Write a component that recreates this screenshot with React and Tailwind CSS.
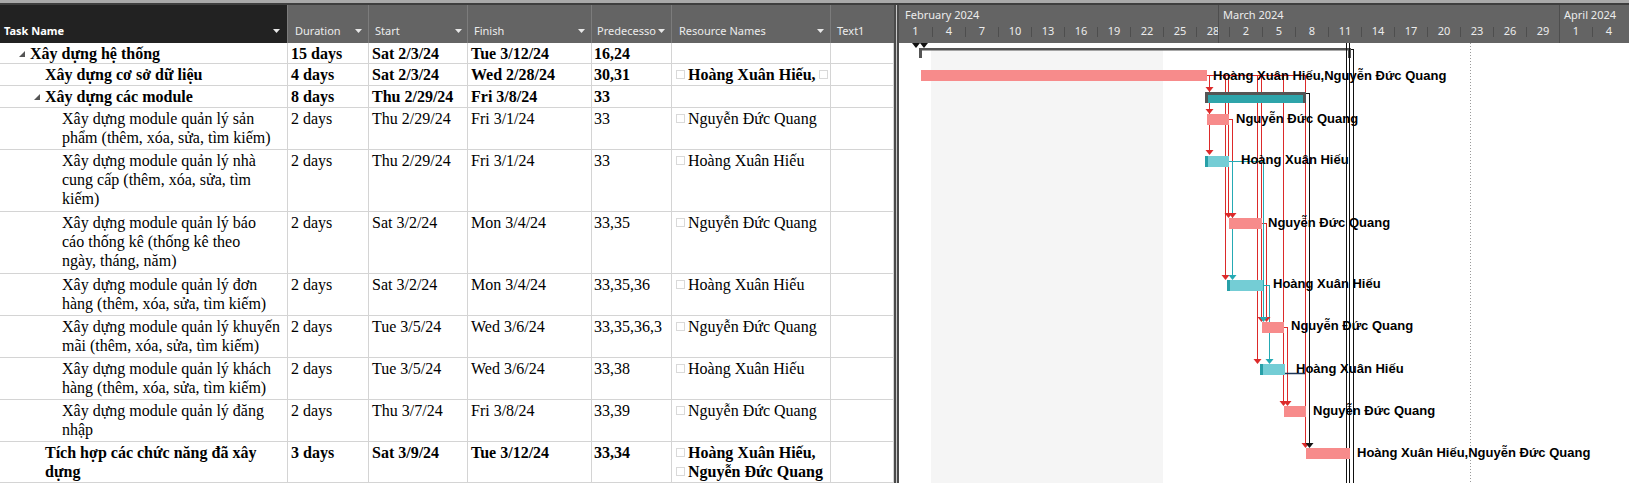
import React from 'react'

const TASKS = [
  { name: ['Xây dựng hệ thống'], pad: 'pl-[19px]', tri: true, b: true, h: 'h-[21px]', dur: '15 days', start: 'Sat 2/3/24', finish: 'Tue 3/12/24', pred: '16,24', res: [] },
  { name: ['Xây dựng cơ sở dữ liệu'], pad: 'pl-[45px]', b: true, h: 'h-[22px]', dur: '4 days', start: 'Sat 2/3/24', finish: 'Wed 2/28/24', pred: '30,31', res: ['Hoàng Xuân Hiếu,'], more: true },
  { name: ['Xây dựng các module'], pad: 'pl-[34px]', tri: true, b: true, h: 'h-[22px]', dur: '8 days', start: 'Thu 2/29/24', finish: 'Fri 3/8/24', pred: '33', res: [] },
  { name: ['Xây dựng module quản lý sản', 'phẩm (thêm, xóa, sửa, tìm kiếm)'], pad: 'pl-[62px]', h: 'h-[42px]', dur: '2 days', start: 'Thu 2/29/24', finish: 'Fri 3/1/24', pred: '33', res: ['Nguyễn Đức Quang'] },
  { name: ['Xây dựng module quản lý nhà', 'cung cấp (thêm, xóa, sửa, tìm', 'kiếm)'], pad: 'pl-[62px]', h: 'h-[62px]', dur: '2 days', start: 'Thu 2/29/24', finish: 'Fri 3/1/24', pred: '33', res: ['Hoàng Xuân Hiếu'] },
  { name: ['Xây dựng module quản lý báo', 'cáo thống kê (thống kê theo', 'ngày, tháng, năm)'], pad: 'pl-[62px]', h: 'h-[62px]', dur: '2 days', start: 'Sat 3/2/24', finish: 'Mon 3/4/24', pred: '33,35', res: ['Nguyễn Đức Quang'] },
  { name: ['Xây dựng module quản lý đơn', 'hàng (thêm, xóa, sửa, tìm kiếm)'], pad: 'pl-[62px]', h: 'h-[42px]', dur: '2 days', start: 'Sat 3/2/24', finish: 'Mon 3/4/24', pred: '33,35,36', res: ['Hoàng Xuân Hiếu'] },
  { name: ['Xây dựng module quản lý khuyến', 'mãi (thêm, xóa, sửa, tìm kiếm)'], pad: 'pl-[62px]', h: 'h-[42px]', dur: '2 days', start: 'Tue 3/5/24', finish: 'Wed 3/6/24', pred: '33,35,36,3', res: ['Nguyễn Đức Quang'] },
  { name: ['Xây dựng module quản lý khách', 'hàng (thêm, xóa, sửa, tìm kiếm)'], pad: 'pl-[62px]', h: 'h-[42px]', dur: '2 days', start: 'Tue 3/5/24', finish: 'Wed 3/6/24', pred: '33,38', res: ['Hoàng Xuân Hiếu'] },
  { name: ['Xây dựng module quản lý đăng', 'nhập'], pad: 'pl-[62px]', h: 'h-[42px]', dur: '2 days', start: 'Thu 3/7/24', finish: 'Fri 3/8/24', pred: '33,39', res: ['Nguyễn Đức Quang'] },
  { name: ['Tích hợp các chức năng đã xây', 'dựng'], pad: 'pl-[45px]', b: true, h: 'h-[41px]', dur: '3 days', start: 'Sat 3/9/24', finish: 'Tue 3/12/24', pred: '33,34', res: ['Hoàng Xuân Hiếu,', 'Nguyễn Đức Quang'] },
]

const DAYS = ['1', '4', '7', '10', '13', '16', '19', '22', '25', '28', '2', '5', '8', '11', '14', '17', '20', '23', '26', '29', '1', '4']

const RED = '#dc2a2a'
const TL = '#25aab4'
const PINK = '#f78b8b'
const TEAL = '#74cdd5'
const TEALD = '#27a0a8'

function DropArrow() {
  return (
    <svg width="7" height="4" className="shrink-0">
      <polygon points="0,0 7,0 3.5,4" fill="#e8e8e8" />
    </svg>
  )
}

function HeadCell({ className, label, arrow = true, bold }) {
  return (
    <div className={`h-full flex items-end pb-[4px] border-r border-[#7c7c7c] ${className}`}>
      <div className="flex items-center justify-between w-full h-[16px] min-w-0">
        <span className={`whitespace-nowrap ${bold ? 'font-bold text-white' : ''}`}>{label}</span>
        {arrow && <DropArrow />}
      </div>
    </div>
  )
}

function Box() {
  return <span className="w-[9px] h-[9px] border border-[#d9d9d9] shrink-0 bg-white" />
}

function Cell({ className, children }) {
  return <div className={`h-full border-r border-[#d4d4d4] overflow-hidden whitespace-nowrap pt-[1px] ${className}`}>{children}</div>
}

function Row({ t }) {
  return (
    <div className={`flex border-b border-[#d4d4d4] shrink-0 ${t.h} ${t.b ? 'font-bold' : ''}`}>
      <Cell className={`w-[288px] flex ${t.pad}`}>
        {t.tri && (
          <span className="w-[11px] h-[19px] flex items-center shrink-0">
            <svg width="6" height="6"><polygon points="6,0 6,6 0,6" fill="#555" /></svg>
          </span>
        )}
        <div>
          {t.name.map((l, i) => <div key={i}>{l}</div>)}
        </div>
      </Cell>
      <Cell className="w-[81px] pl-[3px]">{t.dur}</Cell>
      <Cell className="w-[99px] pl-[3px]">{t.start}</Cell>
      <Cell className="w-[124px] pl-[3px]">{t.finish}</Cell>
      <Cell className="w-[80px] pl-[2px]">{t.pred}</Cell>
      <Cell className="w-[159px] pl-[4px]">
        {t.res.map((r, i) => (
          <div key={i} className="flex items-center gap-[3px] h-[19px]">
            <Box />
            <span>{r}</span>
            {t.more && <Box />}
          </div>
        ))}
      </Cell>
      <Cell className="w-[63px]" />
    </div>
  )
}

function Table() {
  return (
    <div className="w-[894px] shrink-0 flex flex-col">
      <div className="h-[38px] flex bg-[#646464] text-[#ececec] text-[11px] font-['Noto_Sans',sans-serif] shrink-0">
        <HeadCell className="w-[288px] bg-[#222222] pl-[4px] pr-[7px]" label="Task Name" bold />
        <HeadCell className="w-[81px] pl-[7px] pr-[6px]" label="Duration" />
        <HeadCell className="w-[99px] pl-[6px] pr-[5px]" label="Start" />
        <HeadCell className="w-[124px] pl-[6px] pr-[6px]" label="Finish" />
        <HeadCell className="w-[80px] pl-[5px] pr-[6px]" label="Predecesso" />
        <HeadCell className="w-[159px] pl-[7px] pr-[6px]" label="Resource Names" />
        <HeadCell className="w-[63px] pl-[6px] border-r-0" label="Text1" arrow={false} />
      </div>
      <div className="flex-1 flex flex-col font-['Liberation_Serif',serif] text-[16px] leading-[19px] text-black overflow-hidden">
        {TASKS.map((t, i) => <Row key={i} t={t} />)}
      </div>
    </div>
  )
}

function arrow(x, tip, c, k) {
  return <polygon key={k} points={`${x - 4},${tip - 5} ${x + 4},${tip - 5} ${x},${tip}`} fill={c} />
}

function GanttBody() {
  const redV = [[1209.5, 150], [1225.5, 275], [1228.5, 213], [1257.5, 359], [1261.5, 317], [1283.5, 401], [1305.5, 443]]
  const pinks = [[1207, 114, 22], [1229, 218, 33], [1262, 322, 22], [1284, 406, 22], [1306, 448, 44]]
  const teals = [[1205, 156, 24], [1227, 280, 36], [1260, 364, 25]]
  const labels = [
    [1213, 79.5, 'Hoàng Xuân Hiếu,Nguyễn Đức Quang'],
    [1236, 123, 'Nguyễn Đức Quang'],
    [1241, 164, 'Hoàng Xuân Hiếu'],
    [1268, 226.5, 'Nguyễn Đức Quang'],
    [1273, 288, 'Hoàng Xuân Hiếu'],
    [1291, 330, 'Nguyễn Đức Quang'],
    [1296, 372.5, 'Hoàng Xuân Hiếu'],
    [1313, 415, 'Nguyễn Đức Quang'],
    [1357, 456.5, 'Hoàng Xuân Hiếu,Nguyễn Đức Quang'],
  ]
  return (
    <svg width="730" height="440" viewBox="899 43 730 440" className="block">
      <rect x="931" y="50" width="232" height="433" fill="#f5f5f5" />
      <line x1="1470.5" y1="43" x2="1470.5" y2="483" stroke="#9a9a9a" strokeDasharray="1 2" />

      <polygon points="912,43 920,43 916,48" fill="#111" />
      <polygon points="920,43 928,43 924,48" fill="#111" />

      <rect x="919" y="48" width="432" height="2.5" fill="#555" />
      <rect x="919" y="48" width="3" height="10" fill="#555" />
      <rect x="1348" y="48" width="3" height="10" fill="#555" />

      <g fill="none" strokeWidth="1" shapeRendering="crispEdges">
        <line x1="1346.5" y1="43" x2="1346.5" y2="483" stroke="#111" />
        <line x1="1349.5" y1="43" x2="1349.5" y2="483" stroke="#111" />
        <path d="M1351 49.5 H1353.5 V483" stroke="#111" />
        <path d="M1306 93.5 H1309.5 V443" stroke="#111" />
        <path d="M1207 75.5 H1305.5" stroke={RED} />
        {redV.map(([x, y], i) => <line key={i} x1={x} y1="75" x2={x} y2={y} stroke={RED} />)}
        <path d="M1229 119.5 H1232.5 V213" stroke={RED} />
        <path d="M1262 223.5 H1266.5 V317" stroke={RED} />
        <path d="M1284 327.5 H1287.5 V401" stroke={RED} />
        <path d="M1229 161.5 H1263.5 V317" stroke={TL} />
        <path d="M1232.5 161.5 V275" stroke={TL} />
        <path d="M1263 285.5 H1269.5 V359" stroke={TL} />
      </g>
      <path d="M1285 373.5 H1305" stroke="#1d3557" strokeWidth="1.5" fill="none" />

      <rect x="921" y="70" width="286" height="11" fill={PINK} />
      <rect x="1205" y="92" width="101" height="11" fill="#2ea4aa" />
      <rect x="1205" y="92" width="101" height="3" fill="#555" />
      <rect x="1205" y="92" width="3" height="11" fill="#555" />
      <rect x="1303" y="92" width="3" height="11" fill="#555" />
      {pinks.map(([x, y, w], i) => <rect key={i} x={x} y={y} width={w} height="11" fill={PINK} />)}
      {teals.map(([x, y, w], i) => (
        <g key={i}>
          <rect x={x} y={y} width={w} height="11" fill={TEAL} />
          <rect x={x} y={y} width="3" height="11" fill={TEALD} />
        </g>
      ))}

      {arrow(1209.5, 92, RED, 'a1')}
      {arrow(1209.5, 114, RED, 'a2')}
      {arrow(1209.5, 155, RED, 'a3')}
      {arrow(1228.5, 218, RED, 'a4')}
      {arrow(1232.5, 218, RED, 'a5')}
      {arrow(1225.5, 280, RED, 'a6')}
      {arrow(1232.5, 280, TL, 'a7')}
      {arrow(1261.5, 322, RED, 'a8')}
      {arrow(1266.5, 322, RED, 'a9')}
      {arrow(1263.5, 322, TL, 'a10')}
      {arrow(1257.5, 364, RED, 'a11')}
      {arrow(1269.5, 364, TL, 'a12')}
      {arrow(1283.5, 406, RED, 'a13')}
      {arrow(1287.5, 406, RED, 'a14')}
      {arrow(1305.5, 448, RED, 'a15')}
      {arrow(1309.5, 448, '#111', 'a16')}

      <g fontFamily="'Liberation Sans', Arial, sans-serif" fontWeight="bold" fontSize="13" fill="#000">
        {labels.map(([x, y, s], i) => <text key={i} x={x} y={y}>{s}</text>)}
      </g>
    </svg>
  )
}

function Gantt() {
  return (
    <div className="flex-1 flex flex-col min-w-0">
      <div className="h-[38px] bg-[#646464] text-[#ececec] text-[11px] font-['Noto_Sans',sans-serif] relative shrink-0">
        <div className="h-[19px] flex leading-[19px]">
          <div className="w-[319px] shrink-0 pl-[6px]">February 2024</div>
          <div className="w-[341px] shrink-0 pl-[5px]">March 2024</div>
          <div className="flex-1 pl-[5px] whitespace-nowrap">April 2024</div>
        </div>
        <div className="h-[19px] flex">
          {DAYS.map((d, i) => (
            <div key={i} className="w-[33px] shrink-0 flex">
              {i > 0 && <span className="w-px h-[10px] mt-[3px] bg-[#4e4e4e]" />}
              <span className="flex-1 text-center leading-[14px]">{d}</span>
            </div>
          ))}
        </div>
        <span className="absolute left-[319px] top-0 h-full w-px bg-[#4e4e4e]" />
        <span className="absolute left-[660px] top-0 h-full w-px bg-[#4e4e4e]" />
      </div>
      <div className="h-[440px] overflow-hidden bg-white">
        <GanttBody />
      </div>
    </div>
  )
}

export default function App() {
  return (
    <div className="w-[1629px] h-[483px] overflow-hidden bg-white flex flex-col">
      <div className="h-[3px] bg-[#a9a9a9] shrink-0" />
      <div className="h-[2px] bg-[#3e3e3e] shrink-0" />
      <div className="flex flex-1 min-h-0">
        <Table />
        <div className="w-[5px] shrink-0 bg-[#c8c8c8] border-l-2 border-r-2 border-[#4a4a4a]" />
        <Gantt />
      </div>
    </div>
  )
}
